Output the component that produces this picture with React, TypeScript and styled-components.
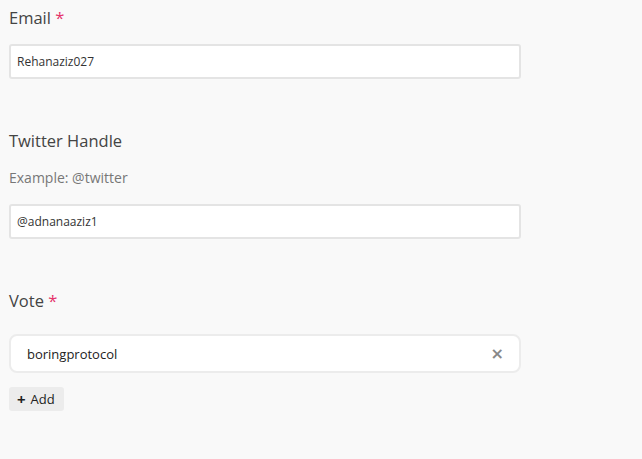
import React from 'react';
import styled, { createGlobalStyle } from 'styled-components';

const GlobalStyle = createGlobalStyle`
  html, body {
    margin: 0;
    padding: 0;
    background: #f9f9f9;
  }
  body {
    font-family: 'Open Sans', 'Noto Sans', sans-serif;
    color: #444;
  }
`;

function App() {
  return (
    <>
      <GlobalStyle />
      <Form>
        <Field>
          <Label>
            Email <Required>*</Required>
          </Label>
          <TextInput defaultValue="Rehanaziz027" />
        </Field>

        <Field>
          <Label>Twitter Handle</Label>
          <Hint>Example: @twitter</Hint>
          <TextInput defaultValue="@adnanaaziz1" />
        </Field>

        <Field>
          <Label $spaced>
            Vote <Required>*</Required>
          </Label>
          <VoteItem>
            <VoteName>boringprotocol</VoteName>
            <RemoveButton type="button" aria-label="remove">
              ×
            </RemoveButton>
          </VoteItem>
          <AddButton type="button">
            <Plus>+</Plus> Add
          </AddButton>
        </Field>
      </Form>
    </>
  );
}

export default App;

const Form = styled.form`
  display: flex;
  flex-direction: column;
  gap: 50px;
  width: 512px;
  padding: 6px 0 0 9px;
`;

const Field = styled.div`
  display: flex;
  flex-direction: column;
`;

const Label = styled.label<{ $spaced?: boolean }>`
  font-size: 16.5px;
  line-height: 24px;
  color: #444;
  margin-bottom: ${(p) => (p.$spaced ? '21px' : '14px')};
`;

const Required = styled.span`
  color: #e5336b;
`;

const Hint = styled.p`
  margin: 0 0 15px;
  font-size: 14px;
  line-height: 22px;
  color: #777;
`;

const TextInput = styled.input`
  box-sizing: border-box;
  width: 100%;
  height: 35px;
  padding: 0 6px;
  border: 2px solid #e4e4e4;
  border-radius: 3px;
  background: #fff;
  font-family: 'Open Sans', 'Noto Sans', sans-serif;
  font-size: 12px;
  color: #333;
  outline: none;
`;

const VoteItem = styled.div`
  box-sizing: border-box;
  display: flex;
  align-items: center;
  justify-content: space-between;
  height: 39px;
  padding: 0 15px 0 16px;
  border: 2px solid #ececec;
  border-radius: 8px;
  background: #fff;
`;

const VoteName = styled.span`
  font-size: 13px;
  color: #222;
`;

const RemoveButton = styled.button`
  border: none;
  background: none;
  padding: 0;
  font-family: 'DejaVu Sans', sans-serif;
  font-size: 16px;
  font-weight: bold;
  line-height: 1;
  color: #888;
  cursor: pointer;
`;

const AddButton = styled.button`
  align-self: flex-start;
  display: flex;
  align-items: center;
  gap: 5px;
  margin-top: 14px;
  height: 24px;
  padding: 0 9px 0 8px;
  border: none;
  border-radius: 3px;
  background: #ececec;
  font-family: 'Open Sans', 'Noto Sans', sans-serif;
  font-size: 13px;
  color: #222;
`;

const Plus = styled.span`
  font-size: 15px;
  font-weight: bold;
  line-height: 1;
`;
